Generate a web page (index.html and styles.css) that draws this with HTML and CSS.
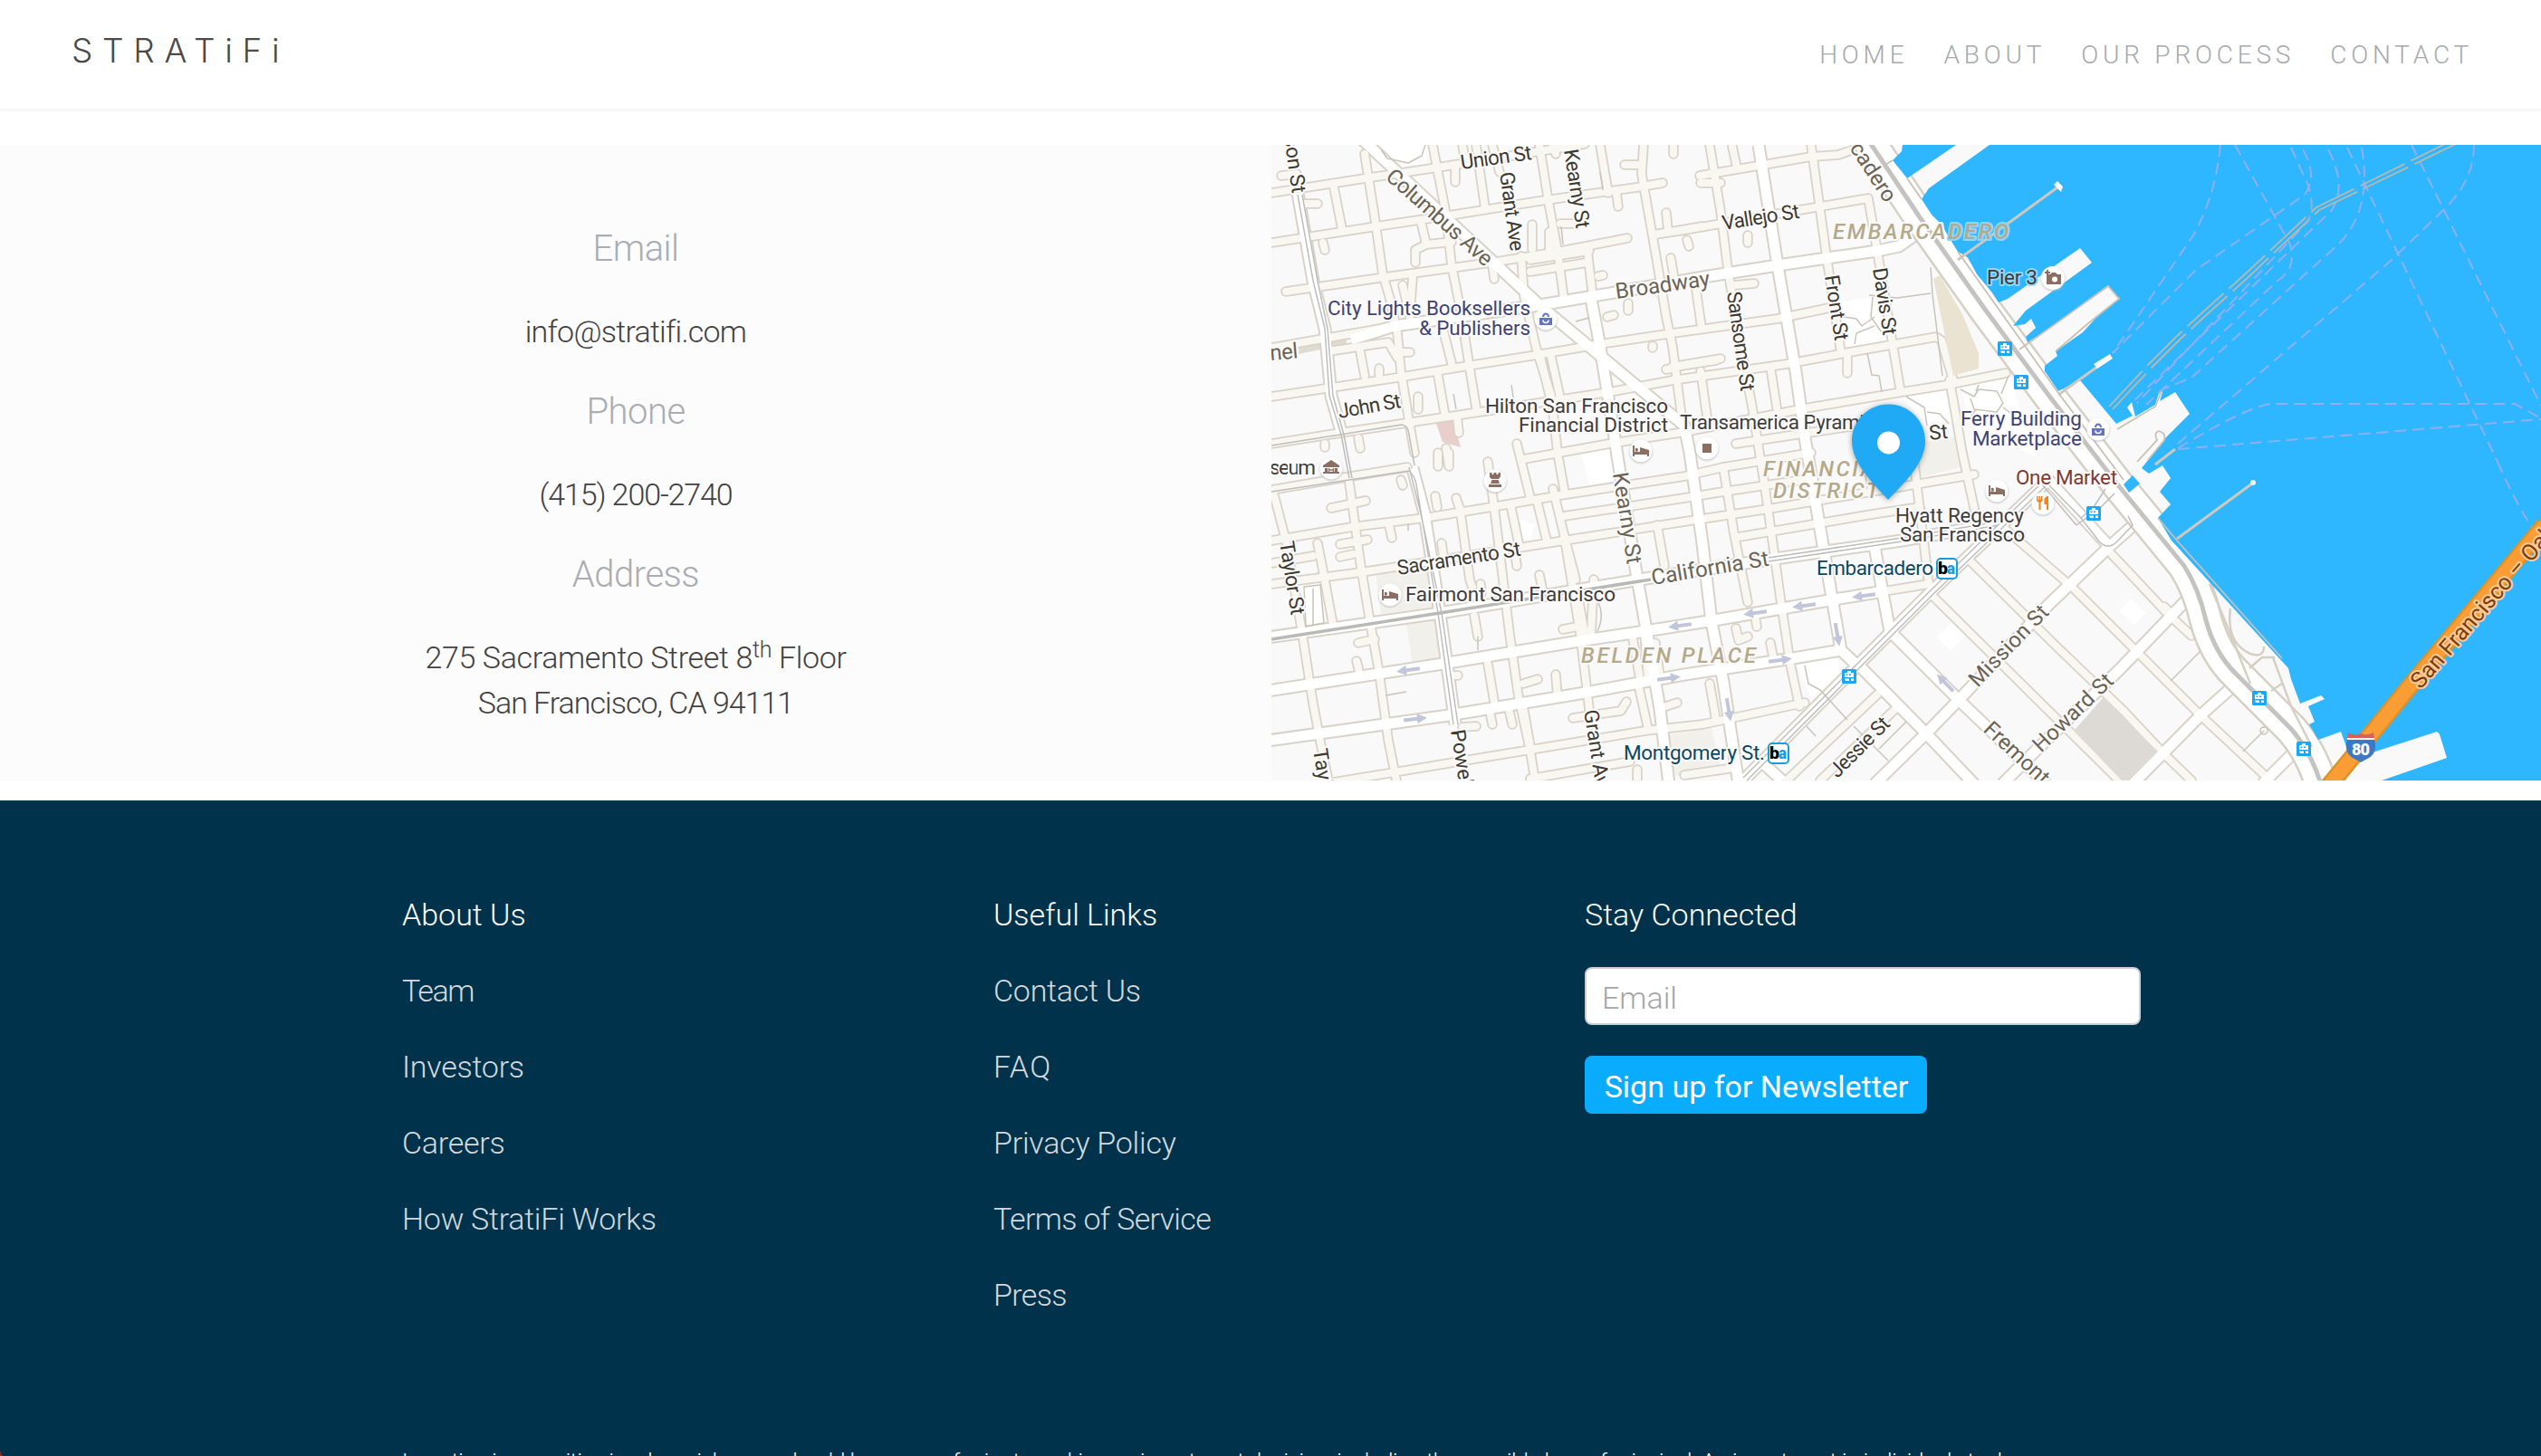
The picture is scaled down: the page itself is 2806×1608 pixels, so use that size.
FILE: index.html
```html
<!DOCTYPE html>
<html lang="en">
<head>
<meta charset="utf-8">
<title>StratiFi</title>
<link rel="stylesheet" href="styles.css">
</head>
<body>
<header class="site-header">
  <a class="logo">STRATiFi</a>
  <nav class="nav">
    <a>HOME</a><a>ABOUT</a><a>OUR PROCESS</a><a>CONTACT</a>
  </nav>
</header>

<main class="contact">
  <section class="details">
    <h2>Email</h2>
    <p class="mail">info@stratifi.com</p>
    <h2>Phone</h2>
    <p class="phone">(415) 200-2740</p>
    <h2>Address</h2>
    <p class="address">275 Sacramento Street 8<sup>th</sup> Floor<br><span class="city">San Francisco, CA 94111</span></p>
  </section>
  <svg class="map" viewBox="1404 160 1402 702" width="1402" height="702">
    <defs>
      <g id="minor">
        <!-- east-west -->
        <path d="M1404 213L1507 197L1587 185L1713 165L1750 159"/>
        <path d="M1404 268L1520 250L1600 238L1700 222L1807 207L1836 202"/>
        <path d="M1420 322L1530 306L1653 289L1720 278L1797 263"/>
        <path d="M1827 259L1860 254L1987 232L2063 219L2073 277"/>
        <path d="M1877 194L2000 173L2030 171L2050 164"/>
        <path d="M1404 384L1490 369L1540 360"/>
        <path d="M1467 388L1533 378L1543 395"/>
        <path d="M1404 438L1543 417L1627 403L1697 392L1767 380L1847 368L1963 352L2020 340"/>
        <path d="M1404 490L1480 478L1587 462L1667 450L1777 433L1847 420L1973 402L2037 390L2138 372L2144 376L2157 420"/>
        <path d="M1404 541L1480 528L1554 516M1683 507L1777 490L1860 477L1993 451L2100 433L2150 425L2215 412"/>
        <path d="M1850 405L1895 398M1840 408L1850 406"/>
        <path d="M1404 597L1493 582L1573 572L1647 560L1723 547L1860 526L1903 516L2000 500"/>
        <path d="M1917 490L2050 470"/>
        <path d="M1727 570L1860 550L1903 543L2003 528"/>
        <path d="M1404 645L1503 632L1677 605L1727 597L1860 576L1953 562L2007 553L2067 543L2180 524"/>
        <path d="M1920 593L2067 568L2120 560"/>
        <path d="M1404 622L1450 614"/>
        <path d="M2080 653L2130 645"/>
        <path d="M1467 865L1617 840L1690 828L1817 807L1880 800L1993 776"/>
        <path d="M1690 860L1800 841M1860 856L1915 848"/>
        <path d="M1557 345L1560 306M1563 290V276L1575 270L1603 267"/>
        <path d="M1690 287L1755 277M1690 300L1752 290"/>
        <path d="M1827 259L1880 250M1847 405L1900 396"/>
        <!-- north-south -->
        <path d="M1407 547L1420 597L1437 693L1450 777L1462 840L1467 862"/>
        <path d="M1490 533L1503 627L1513 687L1523 743L1533 817L1542 862"/>
        <path d="M1473 207L1482 253"/>
        <path d="M1507 170L1517 233L1527 303L1535 330L1543 367L1547 410L1556 465L1562 500"/>
        <path d="M1549 315L1557 350"/>
        <path d="M1582 160L1597 237L1603 293L1613 343L1623 407L1630 450"/>
        <path d="M1570 248L1575 270M1590 350L1604 405M1588 415L1596 460"/>
        <path d="M1613 567L1623 640L1630 660"/>
        <path d="M1630 160L1640 230M1648 160L1656 190M1615 160L1618 178"/>
        <path d="M1680 283L1683 327L1697 387L1713 437L1720 500L1728 545"/>
        <path d="M1700 390L1712 440M1712 390L1722 435"/>
        <path d="M1643 510L1650 560L1657 617L1667 700L1677 770L1690 830L1695 862"/>
        <path d="M1700 160L1710 223L1720 277L1727 330M1715 160L1718 170"/>
        <path d="M1767 160L1776 213M1753 277L1758 320"/>
        <path d="M1813 193L1830 290L1840 350L1847 383L1857 460"/>
        <path d="M1668 557L1677 600M1675 490L1690 550M1697 552L1708 597M1715 540L1727 590L1740 640"/>
        <path d="M1727 590L1745 700L1757 800M1741 650L1750 700M1757 700L1760 640"/>
        <path d="M1830 580L1838 625M1828 710L1833 748"/>
        <path d="M1643 733L1650 775M1682 780L1690 825M1455 600L1460 625L1472 690"/>
        <path d="M1810 760L1820 805M1816 700L1820 750M1803 705L1812 755"/>
        <path d="M1888 160L1900 233L1908 297L1920 370L1935 450L1950 545L1967 667L1977 733L1987 780"/>
        <path d="M1903 516L1915 590L1930 665M1878 410L1885 460M1955 405L1962 450"/>
        <path d="M1873 320L1879 362M1888 755L1895 795"/>
        <path d="M2000 160L2017 283L2033 390"/>
        <path d="M2073 277L2090 380L2098 428"/>
        <path d="M2060 480L2067 543M2113 505L2130 645"/>
        <path d="M2153 420L2167 500L2182 570"/>
        <!-- alleys -->
        <path d="M1415 194L1432 192M1607 185V201M1692 248V275M1711 256V275M1723 247H1737M1441 225H1455M1461 268L1463 276M1648 293L1650 308"/>
        <path d="M1502 388L1507 415M1523 407V414M1545 389H1557M1765 305L1770 304M1775 350L1782 348M1798 335V343M1825 382V384M1848 160V170M1840 235L1842 255M1845 285L1850 315M1863 265L1865 272M1794 182H1808M1785 213L1787 228M1815 160L1813 190M1878 202H1900"/>
        <path d="M1913 162L1918 185M1930 260V268M1915 315L1937 313M2040 390V412M1470 561L1508 553M1480 601L1510 596M1480 615L1494 612M1534 580L1537 594M1547 530L1549 536M1585 548L1587 560M1608 550L1612 562M1592 600L1595 622M1635 645L1636 655M1463 490V494M1500 484L1502 495M1566 438V452M1588 515V500M1600 512V500M1609 460L1611 478M1597 495L1600 515"/>
        <path d="M1500 710L1518 706M1498 730L1501 742M1606 746H1610M1628 680L1632 703M1682 755L1698 750M1718 745L1720 770M1645 785L1648 800M1666 782L1670 800M1615 803L1630 802M1737 793L1790 785L1796 775M1726 695L1742 692M1700 635L1704 655M1673 610L1675 625M1840 780L1852 776M1808 850V862M1917 694L1920 707L1930 703M1938 680L1940 692M1955 710L1958 725"/>
        <!-- south of Market -->
        <path d="M2133 657L2230 753L2333 855L2340 862"/>
        <path d="M2173 617L2270 713L2345 785L2390 833L2420 862"/>
        <path d="M2213 583L2290 650L2360 720L2430 790L2507 862"/>
        <path d="M2330 610L2393 677L2420 702"/>
        <path d="M1973 862L2073 767M2010 862L2093 783M2400 680L2390 670"/>
      </g>
      <g id="major">
        <path d="M1500 150L1700 337L1860 470L1866 500L1880 600L1890 687L1903 753L1920 866"/>
        <path d="M1492 375L1540 360L1700 337L1783 323L1887 305L1963 293L2073 277L2097 272L2117 258"/>
        <path d="M1757 330L1767 383L1783 483L1787 510L1807 633L1820 707L1833 783L1843 866"/>
        <path d="M1942 160L1953 230L1963 293L1983 410L1993 483L2007 567L2023 660L2033 718"/>
        <path d="M1400 704L1590 677L1823 638L1953 618L2100 597L2207 578"/>
        <path d="M1400 763L1593 733L1750 707L1817 697L1893 685L2020 663L2080 653"/>
        <path d="M1400 818L1600 790L1750 765L1860 745L1980 727L2033 718L2053 737"/>
        <path d="M1433 213L1450 310L1463 363L1470 437L1482 480"/>
        <path d="M1560 517L1573 567L1590 677L1607 800"/>
        <path d="M2070 603L2080 660L2087 697L2163 773L2260 866"/>
        <path d="M2053 735L2127 810L2180 866M1946 842L1968 862"/>
        <path d="M1921 866L2053 733L2133 653L2213 577L2262 530"/>
        <path d="M2070 866L2127 810L2163 773L2263 667L2330 603L2356 580"/>
        <path d="M2211 866L2250 827L2340 740L2417 660"/>
        <path d="M2355 866L2430 790L2467 757M2498 866L2537 827"/>
        <path d="M2262 530L2326 600"/>
      </g>
      <path id="shore" d="M2060 150L2120 240L2193 343L2265 440L2340 537L2412 625Q2428 650 2436 685Q2446 722 2470 745L2530 805Q2552 830 2563 866"/>
      <g id="bag"><circle class="poi" r="12.5"/><path fill="#6474c4" d="M-7-1H7V7H-7zM-4-2a4 4.500 0 0 1 8 0h-2a2 2.500 0 0 0-4 0z"/><path d="M-3 1.500a3 3 0 0 0 6 0" fill="none" stroke="#fff" stroke-width="1.600"/></g>
      <g id="bed"><circle class="poi" r="12.500"/><path fill="#8d6e63" d="M-9-6h2v7H9V6H7V4H-7V6h-2zM-6-3a2 2 0 1 1 0 3.500zM-1-4L9-1V1H-1z"/></g>
      <g id="stop"><rect x="-8" y="-8" width="16" height="16" rx="1.500" fill="#1ea6f5"/><path fill="#fff" d="M-5-4h3v-2h4v2h3v5h-10zM-5 2.500h5v2.500h-4zM2 2.500h3v2.500H2z"/><path fill="#1ea6f5" d="M-3.500-2.500h2v1.500h-2zM0-2.500h2v1.500H0z"/></g>
      <g id="bart"><rect x="-11" y="-11" width="22" height="22" rx="4" fill="#fff" stroke="#1d9bdc" stroke-width="2"/><text x="-10" y="6" textLength="11" lengthAdjust="spacingAndGlyphs" fill="#000" class="plain">b</text><text x="0" y="6" textLength="9" lengthAdjust="spacingAndGlyphs" fill="#1d9bdc" class="plain">a</text></g>
      <path id="arrow" fill="#c1c6db" d="M-13-2H2V-5.500L13 0L2 5.500V2H-13z"/>
    </defs>

    <rect x="1404" y="160" width="1402" height="702" fill="#f9f9f9"/>
    <g fill="#fff">
      <path d="M1525 160H1580L1572 184L1540 178zM2026 335L2068 328L2090 378L2040 382zM2165 425L2218 415L2250 505L2175 470zM2100 437L2150 430L2155 465L2125 470z"/>
      <path d="M1745 497L1778 492L1784 530L1755 535zM1438 650L1458 647L1463 690L1440 692zM2138 704L2157 686L2170 702L2154 719zM2340 675L2353 661L2370 677L2357 690zM1985 735L2030 725L2030 745L2000 770zM1674 572L1695 580L1690 598L1678 592z"/>
    </g>
    <g fill="#f2f0eb"><path d="M1519 632L1575 625L1582 670L1525 678zM1553 690L1588 684L1592 728L1560 734zM1840 812L1890 804L1900 848L1850 856z"/><path d="M2110 490L2165 482L2168 515L2118 528z"/></g>
    <path fill="#e9cfcb" d="M1585 465L1604 463L1613 494L1593 488z"/>
    <path fill="#dfdbd1" d="M1434 380L1487 371V380L1434 391z"/>

    <use href="#minor" class="case-minor"/>
    <use href="#major" class="case-major"/>
    <use href="#minor" class="fill-minor"/>
    <use href="#major" class="fill-major"/>

    <path fill="#ebe3d2" d="M2135 308L2142 304L2167 347L2185 390V407L2157 415z"/>
    <path fill="#dddad5" d="M2290 807L2323 770L2383 830L2350 862H2343z"/>
    <g class="path-line">
      <path d="M2132 295L2134 325L2145 415M2064 326L2095 329L2132 324M2036 350L2050 352L2056 360L2070 350M2048 380L2050 368L2070 360M2068 328L2066 350L2080 370M2062 390L2067 414L2075 415L2078 433"/>
      <path d="M2165 430L2180 438L2185 430L2205 432L2212 445L2205 455L2180 452L2176 440M2185 425L2182 432M2218 415L2210 435M2212 450L2228 462M2175 462L2182 452M2105 438L2125 450L2128 470M2128 455L2142 457L2152 468"/>
      <path d="M1525 165L1532 175L1555 180L1570 172L1574 160M1740 355L1755 351M1767 190L1770 210M1724 250L1726 270M1605 435L1608 452M1669 425L1672 445M1440 648L1458 646L1462 688L1442 692zM1450 650V690M1530 768L1553 764M1765 665Q1772 680 1764 697M1632 703V718M1555 578V586"/>
      <path d="M1993 735L1997 755L2010 762L2040 795M1995 802L2005 813M2047 802L2085 840M2075 827L2105 797M2430 700L2434 715L2397 752M2500 807L2477 830"/>
      <circle cx="2500" cy="807" r="4"/>
    </g>
    <g class="rail">
      <path d="M1433 215L1450 310L1463 363L1468 437L1481 480L1490 528M1438 215L1455 310L1466 363L1472 437L1484 480L1493 528"/>
      <path d="M1404 492L1480 480L1548 469Q1555 470 1556 480L1562 514M1404 543L1490 530L1556 520Q1562 525 1564 535L1588 677L1605 800M1556 516L1569 567L1592 677L1610 800"/>
      <path d="M1953 616L2100 594L2207 576M1953 620L2100 598L2207 580M1925 859L2053 731L2133 651L2260 528M1929 862L2056 735L2136 655L2264 532"/>
    </g>
    <path d="M1404 706L1590 677L1823 640" fill="none" stroke="#b9b9b7" stroke-width="3.500"/>

    <use href="#shore" class="shore-case"/>
    <use href="#shore" class="shore-fill"/>
    <use href="#shore" class="shore-rail"/>
    <g class="rail"><path d="M2262 535L2298 572L2318 598Q2328 608 2338 598L2355 580L2350 570M2255 535L2293 580L2320 560L2335 545M2298 572L2312 560L2325 540"/></g>
    <path fill="none" stroke="#d6cfc4" stroke-width="2.500" d="M2440 645Q2455 680 2485 755M2463 672Q2458 710 2485 722Q2500 727 2500 714M2510 726L2530 780L2553 825M2484 738L2498 726H2512M2508 763L2520 755"/>

    <path fill="#2eb7ff" d="M2101 160L2100 167L2090 177L2106 197L2160 160H2197L2130 208L2122 220L2133 237L2143 247L2162 278L2173 284L2183 303L2200 323L2207 334L2217 330L2297 274L2310 290L2237 343L2223 360L2236 358L2243 352L2248 362L2237 372L2239 378L2258 366L2328 315L2341 330L2320 345L2300 367L2270 388L2272 393L2258 404V410L2273 432L2297 420L2337 468L2355 459L2349 450L2354 444L2358 460L2380 447L2385 431L2388 433L2385 443L2402 433L2418 457L2392 483L2365 517L2373 523L2388 514L2397 528L2385 543L2397 557L2383 572L2398 597L2527 738L2530 750L2540 777L2563 768L2567 772L2549 780L2556 797L2550 800L2560 817L2585 808L2593 830H2623L2688 809Q2692 807 2694 811L2702 837L2630 862H2806V160z"/>
    <path fill="#2eb7ff" d="M2345 535L2355 525L2363 534L2351 544z"/>
    <g class="ferry">
      <path d="M2452 160Q2447 215 2422 260L2333 390M2468 160L2528 268Q2538 295 2515 310L2370 447"/>
      <path d="M2530 163L2549 205Q2557 230 2548 245L2360 445M2543 165Q2560 195 2545 215L2425 298L2333 390"/>
      <path d="M2571 165Q2592 205 2575 232L2356 443M2608 163Q2620 230 2584 268L2420 417L2388 430"/>
      <path d="M2592 163L2758 510M2663 160L2806 448M2732 160Q2732 200 2698 232L2640 288L2405 490M2405 495Q2480 450 2507 446H2777L2806 462M2405 496L2806 463M2758 510Q2785 570 2799 585"/>
    </g>
    <g fill="none" stroke="#b9b8ae" stroke-width="1.800" stroke-dasharray="54 8">
      <path d="M2329 449L2372 403L2403 372L2430 347L2480 302L2558 229L2613 202L2708 155M2333 452L2376 406L2407 375L2434 350L2484 305L2561 232L2615 206L2716 157"/>
    </g>
    <g class="jetty">
      <path d="M2162 287L2272 207"/><path d="M2273 436L2330 395"/><path d="M2404 595L2487 534"/><path d="M2380 513L2402 496"/>
    </g>
    <path fill="#f9f9f9" d="M2268 204L2272 200L2278 206L2276 212zM2312 402L2330 391L2333 396L2316 407z"/><circle cx="2488" cy="533" r="3" fill="#f2f1ee"/>
    <g fill="none" stroke="#c8c0b5" stroke-width="1.800"><path d="M2230 386L2328 316L2340 330L2305 358L2270 388M2338 474L2380 449L2387 432M2122 220L2106 197M2090 177L2077 185M2162 278L2273 434L2345 530M2383 572L2404 597L2520 727"/><path d="M2360 510L2382 486Q2378 478 2384 476Q2392 478 2390 486L2372 508"/></g>
    <path d="M2570 870L2597 837L2657 763L2810 580" fill="none" stroke="#dc9229" stroke-width="20"/>
    <path d="M2570 870L2597 837L2657 763L2810 580" fill="none" stroke="#f99d34" stroke-width="15"/>

    <use href="#arrow" transform="translate(1555 740) rotate(172)"/>
    <use href="#arrow" transform="translate(1563 794) rotate(-7)"/>
    <use href="#arrow" transform="translate(1855 691) rotate(172)"/>
    <use href="#arrow" transform="translate(1843 749) rotate(-8)"/>
    <use href="#arrow" transform="translate(1938 677) rotate(172)"/>
    <use href="#arrow" transform="translate(1992 669) rotate(172)"/>
    <use href="#arrow" transform="translate(2058 658) rotate(172)"/>
    <use href="#arrow" transform="translate(1966 729) rotate(-8)"/>
    <use href="#arrow" transform="translate(2029 701) rotate(80)"/>
    <use href="#arrow" transform="translate(1909 784) rotate(80)"/>
    <use href="#arrow" transform="translate(2148 754) rotate(-134)"/>

    <g class="street">
      <text transform="translate(1427 214) rotate(82)" text-anchor="end">Mason St</text>
      <text transform="translate(1614 187) rotate(-8)" textLength="79">Union St</text>
      <text transform="translate(1656 191) rotate(82)" textLength="88">Grant Ave</text>
      <text transform="translate(1727 166) rotate(81)" textLength="88">Kearny St</text>
      <text transform="translate(1903 254) rotate(-9)" textLength="86">Vallejo St</text>
      <text transform="translate(1907 323) rotate(82)" textLength="111">Sansome St</text>
      <text transform="translate(2015 305) rotate(81)" textLength="73">Front St</text>
      <text transform="translate(2068 297) rotate(81)" textLength="75">Davis St</text>
      <text transform="translate(1479 462) rotate(-10)" textLength="70">John St</text>
      <text transform="translate(2131 486) rotate(-6)">St</text>
      <text transform="translate(1544 635) rotate(-9)" textLength="138">Sacramento St</text>
      <text transform="translate(1413 599) rotate(81)" textLength="82">Taylor St</text>
      <text transform="translate(1450 828) rotate(81)">Taylor St</text>
      <text transform="translate(1602 807) rotate(81)">Powell St</text>
      <text transform="translate(1749 785) rotate(81)">Grant Ave</text>
      <text transform="translate(2029 860) rotate(-45)" textLength="84">Jessie St</text>
    </g>
    <g class="avenue">
      <text transform="translate(1529 197) rotate(41.500)" textLength="148">Columbus Ave</text>
      <text transform="translate(1785 330) rotate(-8)" textLength="105">Broadway</text>
      <text transform="translate(2082 225) rotate(57)" text-anchor="end">Embarcadero</text>
      <text transform="translate(1403 398) rotate(-5)" textLength="31">nel</text>
      <text transform="translate(1781 523) rotate(81)" textLength="102">Kearny St</text>
      <text transform="translate(1825 646) rotate(-9.500)" textLength="131">California St</text>
      <text transform="translate(2184 760) rotate(-46)" textLength="115">Mission St</text>
      <text transform="translate(2254 832) rotate(-44)" textLength="113">Howard St</text>
      <text transform="translate(2189 807) rotate(43)">Fremont St</text>
    </g>
    <g class="place">
      <text x="1402" y="524" textLength="51">seum</text>
      <text x="1640" y="456" textLength="202">Hilton San Francisco</text>
      <text x="1677" y="477" textLength="165">Financial District</text>
      <text x="1855" y="474" textLength="216">Transamerica Pyramid</text>
      <text x="1552" y="664" textLength="232">Fairmont San Francisco</text>
      <text x="2093" y="577" textLength="142">Hyatt Regency</text>
      <text x="2098" y="598" textLength="138">San Francisco</text>
      <text x="2194" y="314" textLength="56" class="over-water">Pier 3</text>
      <g fill="#3f4373"><text x="1466" y="348" textLength="224">City Lights Booksellers</text><text x="1567" y="370" textLength="123">&amp; Publishers</text>
      <text x="2165" y="470" textLength="134">Ferry Building</text><text x="2178" y="492" textLength="121">Marketplace</text></g>
      <g fill="#0c4560"><text x="1793" y="839" textLength="156">Montgomery St.</text><text x="2006" y="635" textLength="129">Embarcadero</text></g>
      <text x="2226" y="535" textLength="112" fill="#7d3b32">One Market</text>
    </g>
    <g class="district">
      <text x="2024" y="264" textLength="194">EMBARC<tspan>A</tspan><tspan class="over-water">DERO</tspan></text>
      <text x="1947" y="526" textLength="138">FINANCIAL</text>
      <text x="1958" y="550" textLength="117">DISTRICT</text>
      <text x="1746" y="732" textLength="193">BELDEN PLACE</text>
    </g>
    <text class="bridge" transform="translate(2673 762) rotate(-49)">San Francisco – Oakland</text>

    <use href="#bag" x="1707" y="352"/><use href="#bag" x="2317" y="474"/>
    <use href="#bed" x="1812" y="498"/><use href="#bed" x="1535" y="657"/><use href="#bed" x="2205" y="542"/>
    <g transform="translate(2267 307)"><circle class="poi" r="13"/><path fill="#8d6e63" d="M-7-4h4l2-2H3l2 2H9V7H-7zM-9-7h2v-2h2v2h2v2h-2v2h-2v-2h-2z"/><circle cx="2" cy="1.500" r="3" fill="#fff"/></g>
    <g transform="translate(1885 495)"><circle class="poi" r="12.500"/><rect x="-5" y="-5" width="10" height="10" fill="#8d6e63"/></g>
    <g transform="translate(1470 517)"><circle class="poi" r="12.500"/><path fill="#8d6e63" d="M0-9L9-3V-1H-9V-3zM-7 0H7V4H9V6H-9V4H-7z"/><path fill="#fff" d="M-4 0h8v4h-8z"/><path d="M-2.500 0V4M2.500 0V4M-2.500 2H2.500" stroke="#8d6e63" stroke-width="1.500"/></g>
    <g transform="translate(1651 531)"><circle class="poi" r="12.500"/><path fill="#8d6e63" d="M-6-9h2.500v2h2v-2h3v2h2v-2H6v4L4-2H-4L-6-4zM-3.500-1h7L5 3H-5zM-7 4H7V7H-7z"/></g>
    <g transform="translate(2256 556)"><circle class="poi" r="12.500"/><path fill="#f58220" d="M-7-8h1.500v4h1v-4h1.500v4h1v-4H-.5v5L-2.500-1V7h-2V-1L-7-3zM6-8V7H4V1H1.500V-4Q2-8 6-8z"/></g>
    <use href="#stop" x="2214" y="385"/><use href="#stop" x="2232" y="422"/><use href="#stop" x="2312" y="567"/>
    <use href="#stop" x="2042" y="747"/><use href="#stop" x="2495" y="771"/><use href="#stop" x="2544" y="827"/>
    <use href="#bart" x="2150" y="628"/><use href="#bart" x="1964" y="832"/>

    <g transform="translate(2607 825)">
      <path fill="#3c78c3" d="M-15-9H15Q19 6 9 12Q3 15 0 17Q-3 15-9 12Q-19 6-15-9z"/>
      <path fill="#d9605a" d="M-14-16Q-7-12 0-15Q7-12 14-16L15-10H-15z"/><path fill="#fff" d="M-15-10H15V-8H-15z"/>
      <text class="plain" x="-10" y="9" fill="#fff" textLength="20">80</text>
    </g>
    <path class="pin" d="M2085.500 446.500C2108 446.500 2126 464.500 2126 487C2126 512 2102 534 2085 552C2069 534 2045 512 2045 487C2045 464.500 2063 446.500 2085.500 446.500z"/>
    <circle cx="2085.500" cy="489" r="12.500" fill="#fff"/>
  </svg>
</main>

<footer class="footer">
  <div class="columns">
    <div class="col">
      <h3>About Us</h3>
      <a class="tight">Team</a><a>Investors</a><a>Careers</a><a>How StratiFi Works</a>
    </div>
    <div class="col">
      <h3>Useful Links</h3>
      <a>Contact Us</a><a class="loose">FAQ</a><a>Privacy Policy</a><a class="snug">Terms of Service</a><a class="snug">Press</a>
    </div>
    <form class="col">
      <h3>Stay Connected</h3>
      <input type="text" placeholder="Email">
      <button type="button">Sign up for Newsletter</button>
    </form>
  </div>
  <p class="disclaimer">Investing in securities involves risks, you should be aware of prior to making an investment decision, including the possible loss of principal. An investment in individual stocks</p>
</footer>
</body>
</html>
```
FILE: styles.css
```css
* { box-sizing: border-box; }
html, body { margin: 0; height: 1608px; overflow: hidden; }
body {
  background: #fff;
  font-family: Roboto, "Liberation Sans", sans-serif;
  font-weight: 300;
  font-size: 34px;
  color: #414141;
}
h2, h3, p { margin: 0; font-weight: inherit; }

.site-header {
  display: flex;
  justify-content: space-between;
  align-items: flex-start;
  height: 120px;
  padding: 36px 75px 0 79px;
  box-shadow: 0 2px 4px #f1f1f8;
}
.logo {
  font-family: Inter, "Liberation Sans", sans-serif;
  font-size: 37px;
  font-weight: 350;
  line-height: 40px;
  letter-spacing: 10.7px;
  color: #4a4a4a;
}
.nav {
  display: flex;
  gap: 39px;
  padding-top: 5px;
  font-size: 28px;
  line-height: 40px;
  letter-spacing: 4.8px;
  color: #a6a9ae;
}

.contact {
  display: flex;
  height: 724px;
  margin-top: 40px;
  background: linear-gradient(#fcfcfc 0 702px, #fff 702px);
}
.details {
  width: 1404px;
  padding-top: 87px;
  text-align: center;
  line-height: 50px;
}
.details h2 {
  margin-bottom: 38px;
  font-size: 40px;
  line-height: 56px;
  letter-spacing: -.5px;
  color: #a9adb3;
}
.details p { margin-bottom: 36px; }
.details .mail { letter-spacing: -.75px; }
.details .phone { letter-spacing: -1.1px; }
.details .address { letter-spacing: -.35px; }
.details .city { letter-spacing: -1px; }
.details sup { font-size: 25px; line-height: 0; vertical-align: 12px; }

.map { display: block; width: 1402px; height: 702px; }
.map text {
  font-weight: 400;
  font-size: 22.5px;
  paint-order: stroke;
  stroke: #fafafa;
  stroke-width: 4px;
  stroke-linejoin: round;
}
.map .plain { stroke: none; font-size: 18px; font-weight: 900; }
.street text { fill: #3d392f; }
.map .avenue text { fill: #6a6353; font-size: 24px; }
.place { fill: #3f3c3a; }
.map .over-water { stroke: #8fd6fb; }
.map .district text { fill: #b5a98a; font-size: 24px; font-weight: 500; font-style: italic; }
.map .bridge { fill: #7a3c0c; font-size: 25px; stroke: #fbcb95; }
.case-minor, .case-major, .fill-minor, .fill-major,
.path-line, .rail, .ferry, .shore-case, .shore-fill, .shore-rail, .jetty {
  fill: none;
  stroke-linejoin: round;
}
.case-minor { stroke: #d9d2c8; stroke-width: 11.5px; stroke-linecap: round; }
.fill-minor { stroke: #f9f7f2; stroke-width: 8px; stroke-linecap: round; }
.case-major { stroke: #d9d2c8; stroke-width: 15px; }
.fill-major { stroke: #fff; stroke-width: 11px; }
.path-line { stroke: #c9c4ba; stroke-width: 1.5px; }
.rail { stroke: #bdbdbb; stroke-width: 1.5px; }
.shore-case { stroke: #d6cfc4; stroke-width: 38px; }
.shore-fill { stroke: #fff; stroke-width: 33px; }
.shore-rail { stroke: #c4c3c0; stroke-width: 5px; }
.ferry { stroke: #8fb0f6; stroke-width: 2px; stroke-dasharray: 13 7; }
.jetty { stroke: #cdc9c0; stroke-width: 3px; }
.poi { fill: #fff; filter: drop-shadow(0 1px 1px #bbb); }
.pin { fill: #20aaf5; filter: drop-shadow(0 1px 3px rgba(0, 0, 0, .35)); }

.footer {
  position: relative;
  height: 724px;
  padding: 106px 0 0 444px;
  background: #00334b;
  color: #d3d9dd;
}
.columns { display: grid; grid-template-columns: 653px 653px 614px; height: 608px; }
.col { display: flex; flex-direction: column; align-items: flex-start; line-height: 40px; }
.col h3 { font-size: 34px; color: #fff; }
.col a { margin-top: 44px; letter-spacing: -.25px; }
.col .tight { letter-spacing: -1.4px; }
.col .snug { letter-spacing: -.65px; }
.col .loose { letter-spacing: 1.5px; }
.col input {
  width: 614px;
  height: 64px;
  margin-top: 38px;
  padding: 4px 17px 0;
  border: 2px solid #ccd0d6;
  border-radius: 8px;
  font: inherit;
}
.col input::placeholder { color: #a5a5a5; }
.col button {
  width: 378px;
  height: 64px;
  margin-top: 34px;
  padding: 4px 0 0 1px;
  border: 0;
  border-radius: 8px;
  background: #0aacfd;
  color: #fff;
  font: inherit;
  font-weight: 400;
}
.disclaimer { width: 1900px; font-size: 24px; line-height: 32px; letter-spacing: -.17px; white-space: nowrap; color: #fff; }
.footer::after {
  content: "";
  position: absolute;
  left: 0;
  bottom: 0;
  width: 6px;
  height: 12px;
  background: radial-gradient(ellipse at 100% 0, transparent 0 75%, #8c2b26 80%);
}
```
